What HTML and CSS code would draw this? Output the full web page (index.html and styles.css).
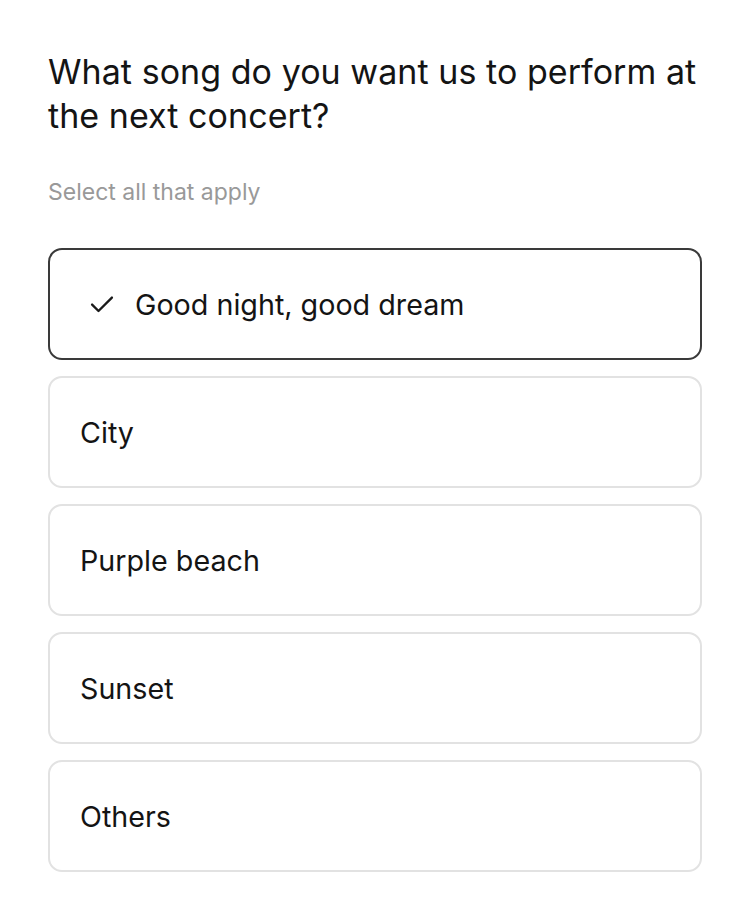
FILE: index.html
```html
<!DOCTYPE html>
<html lang="en">
<head>
<meta charset="utf-8">
<link rel="stylesheet" href="styles.css">
</head>
<body>
<main class="survey">
  <h1 class="question">What song do you want us to perform at the next concert?</h1>
  <p class="hint">Select all that apply</p>
  <ul class="options">
    <li class="option selected">
      <svg class="check" width="28" height="28" viewBox="0 0 24 24" fill="none" stroke="#1a1a1a" stroke-width="2" stroke-linecap="round" stroke-linejoin="round"><path d="M3.5 12.5l5.5 5.5L20.5 6.5"/></svg>
      <span>Good night, good dream</span>
    </li>
    <li class="option"><span>City</span></li>
    <li class="option"><span>Purple beach</span></li>
    <li class="option"><span>Sunset</span></li>
    <li class="option"><span>Others</span></li>
  </ul>
</main>
</body>
</html>
```
FILE: styles.css
```css
* { box-sizing: border-box; }
html, body { margin: 0; padding: 0; background: #fff; }
body {
  font-family: Inter, "Noto Sans", "Liberation Sans", sans-serif;
  color: #141414;
}
.survey {
  padding: 50px 48px 40px;
}
.question {
  margin: 0;
  font-size: 34px;
  font-weight: 400;
  line-height: 44px;
  letter-spacing: 0.05px;
}
.hint {
  margin: 40px 0 0;
  font-size: 23px;
  line-height: 28px;
  color: #999;
}
.options {
  list-style: none;
  margin: 42px 0 0;
  padding: 0;
  display: flex;
  flex-direction: column;
  gap: 16px;
}
.option {
  height: 112px;
  border: 2px solid #e2e2e2;
  border-radius: 14px;
  padding: 0 30px;
  display: flex;
  align-items: center;
  font-size: 28.7px;
}
.option.selected {
  border-color: #3a3a3a;
  padding-left: 38px;
}
.check {
  margin-right: 19px;
  flex: none;
}
```
